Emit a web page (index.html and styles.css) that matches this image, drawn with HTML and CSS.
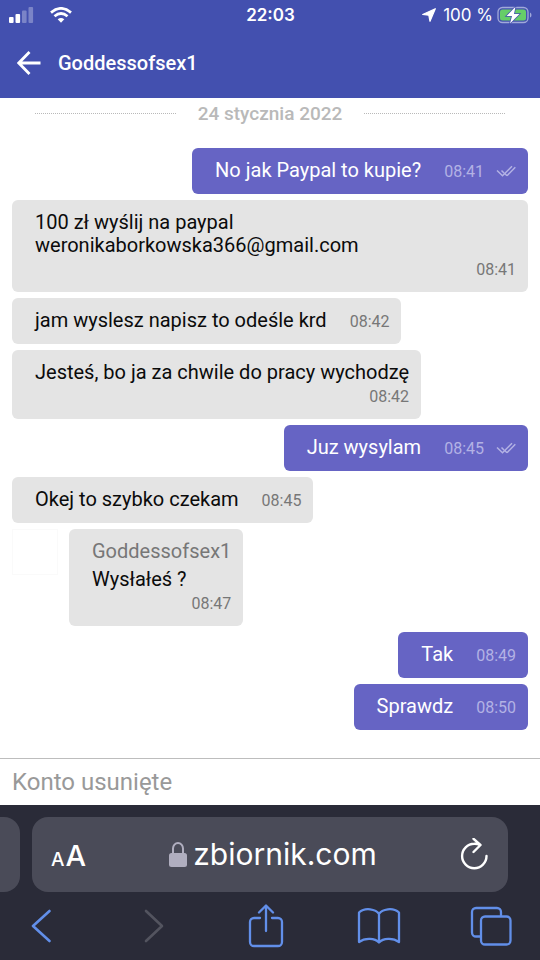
FILE: index.html
```html
<!DOCTYPE html>
<html lang="pl">
<head>
<meta charset="utf-8">
<meta name="viewport" content="width=device-width, initial-scale=1">
<title>Goddessofsex1</title>
<link rel="stylesheet" href="styles.css">
</head>
<body>
<div class="screen">
  <header class="top">
    <div class="status">
      <div class="status-side">
        <svg width="25" height="16" viewBox="0 0 25 16" fill="#fff" aria-hidden="true"><rect x="0" y="10" width="4.600" height="6" rx="1"/><rect x="6.500" y="7" width="4.600" height="9" rx="1"/><rect x="13" y="3.500" width="4.600" height="12.500" rx="1" opacity=".3"/><rect x="19.500" y="0" width="4.600" height="16" rx="1" opacity=".3"/></svg>
        <svg class="wifi" width="22" height="16" viewBox="0 0 22 16" fill="none" stroke="#fff" stroke-width="2.8" aria-hidden="true"><path d="M1 5.6Q11-2.8 21 5.6"/><path d="M4.5 9.3Q11 3.8 17.500 9.300"/><path d="M11 15.700L7.700 12.300Q11 9.700 14.300 12.300Z" fill="#fff" stroke="none"/></svg>
      </div>
      <time class="clock">22:03</time>
      <div class="status-side status-end">
        <svg width="14" height="14" viewBox="0 0 14 14" fill="#fff" aria-hidden="true"><path d="M13.300.7L8 13.300L6.800 7.200L.7 6.500Z" stroke="#fff" stroke-width="1.200" stroke-linejoin="round"/></svg>
        <span class="percent">100 %</span>
        <svg width="35" height="18" viewBox="0 0 35 18" aria-hidden="true"><rect x="1" y="1.500" width="30" height="15" rx="4.500" fill="none" stroke="#a0a8da" stroke-width="1.300"/><rect x="3" y="3.500" width="26" height="11" rx="2.500" fill="#66cd68"/><path d="M33 6.500q1.500.5 1.500 2.500t-1.500 2.500z" fill="#a0a8da"/><path d="M18.500.8L9.500 10H15L13 17.400L22.500 8H17Z" fill="#fff" stroke="#4350af" stroke-width="1.500" paint-order="stroke"/></svg>
      </div>
    </div>
    <div class="titlebar">
      <button class="icon-button" type="button" aria-label="Wstecz">
        <svg width="24" height="24" viewBox="0 0 24 24" fill="none" stroke="#fff" stroke-width="2.800"><path d="M12.500 1L1.800 12L12.500 23M2 12H23.500"/></svg>
      </button>
      <h1 class="title">Goddessofsex1</h1>
    </div>
  </header>

  <main class="chat">
    <div class="date"><span>24 stycznia 2022</span></div>
    <div class="message sent"><p>No jak Paypal to kupie?</p><time>08:41</time>
      <svg class="ticks" width="20" height="12" viewBox="0 0 20 12" fill="none" stroke="#b3b2e4" stroke-width="1.500"><path d="M1 5.500L6.500 10.800L16 1.200M5.500 5.500L8 8M11 10.800L19.300 2.200M8.500 8.300L11 10.800"/></svg></div>
    <div class="message wrapped full"><p>100 zł wyślij na paypal<br>weronikaborkowska366@gmail.com</p><time>08:41</time></div>
    <div class="message"><p>jam wyslesz napisz to odeśle krd</p><time>08:42</time></div>
    <div class="message wrapped"><p>Jesteś, bo ja za chwile do pracy wychodzę</p><time>08:42</time></div>
    <div class="message sent"><p>Juz wysylam</p><time>08:45</time>
      <svg class="ticks" width="20" height="12" viewBox="0 0 20 12" fill="none" stroke="#b3b2e4" stroke-width="1.500"><path d="M1 5.500L6.500 10.800L16 1.200M5.500 5.500L8 8M11 10.800L19.300 2.200M8.500 8.300L11 10.800"/></svg></div>
    <div class="message"><p>Okej to szybko czekam</p><time>08:45</time></div>
    <div class="row">
      <div class="avatar"></div>
      <div class="message wrapped"><span class="author">Goddessofsex1</span><p>Wysłałeś ?</p><time>08:47</time></div>
    </div>
    <div class="message sent"><p>Tak</p><time>08:49</time></div>
    <div class="message sent"><p>Sprawdz</p><time>08:50</time></div>
  </main>

  <input class="composer" type="text" placeholder="Konto usunięte" aria-label="Wiadomość" disabled>

  <footer class="browser">
    <div class="tabs">
      <div class="tab-edge"></div>
      <div class="address">
        <button class="icon-button text-size" type="button" aria-label="Rozmiar tekstu"><span class="small-a">A</span><span>A</span></button>
        <a class="domain" href="#">
          <svg width="18" height="26" viewBox="0 0 18 26"><path d="M4 12V6.500a5 5.500 0 0 1 10 0V12" fill="none" stroke="#b0aebf" stroke-width="2"/><rect x="0" y="11" width="18" height="14" rx="2.500" fill="#b0aebf"/></svg>
          <span>zbiornik.com</span>
        </a>
        <button class="icon-button" type="button" aria-label="Odśwież">
          <svg width="28" height="34" viewBox="0 0 28 34" fill="none" stroke="#fff" stroke-width="2.400" stroke-linecap="round" stroke-linejoin="round"><path d="M26.500 18A12.200 12.200 0 1 1 14.300 5.800Q17 5.700 20 6.800M13.500.8L20.500 7L13.500 14"/></svg>
        </button>
      </div>
    </div>
    <nav class="toolbar">
      <button class="icon-button" type="button" aria-label="Poprzednia strona"><svg width="20" height="34" viewBox="0 0 20 34" fill="none" stroke="#628fe9" stroke-width="2.600" stroke-linecap="round" stroke-linejoin="round"><path d="M18.500 2L2 17L18.500 32"/></svg></button>
      <button class="icon-button" type="button" aria-label="Następna strona" disabled><svg width="20" height="34" viewBox="0 0 20 34" fill="none" stroke="#53545f" stroke-width="2.600" stroke-linecap="round" stroke-linejoin="round"><path d="M2 2L18 17L2 32"/></svg></button>
      <button class="icon-button" type="button" aria-label="Udostępnij"><svg width="36" height="44" viewBox="0 0 36 44" fill="none" stroke="#628fe9" stroke-width="2.300" stroke-linecap="round" stroke-linejoin="round"><path d="M12 14H6a4 4 0 0 0-4 4V38a4 4 0 0 0 4 4H30a4 4 0 0 0 4-4V18a4 4 0 0 0-4-4H24M18 27V2M11 8.500L18 1.500L25 8.500"/></svg></button>
      <button class="icon-button" type="button" aria-label="Zakładki"><svg width="44" height="36" viewBox="0 0 44 36" fill="none" stroke="#628fe9" stroke-width="2.300" stroke-linejoin="round"><path d="M22 6C19 1 8-1 2 4.500V34C8 29.500 18 30 22 34.500C26 30 36 29.500 42 34V4.500C36-1 25 1 22 6V34.500"/></svg></button>
      <button class="icon-button" type="button" aria-label="Karty"><svg width="42" height="40" viewBox="0 0 42 40" fill="none" stroke="#628fe9" stroke-width="2.300"><path d="M11 30.500H6a4 4 0 0 1-4-4V6a4 4 0 0 1 4-4H27a4 4 0 0 1 4 4V10.500"/><rect x="11" y="10.500" width="29.500" height="28" rx="4"/></svg></button>
    </nav>
  </footer>
</div>
</body>
</html>
```
FILE: styles.css
```css
* { box-sizing: border-box; }
body { margin: 0; background: #fff; font-family: Roboto, "Liberation Sans", sans-serif; font-size: 20px; line-height: 23px; color: #0b0b0b; }
p, h1 { margin: 0; }
svg { display: block; flex: none; }
.screen { display: flex; flex-direction: column; min-height: 100vh; }
.icon-button { display: flex; align-items: center; padding: 0; border: 0; background: none; color: inherit; font: inherit; }

.top { background: #4350af; color: #fff; }
.status { display: flex; align-items: center; height: 28px; padding: 2px 8px 0 9px; font-family: Inter, sans-serif; }
.status-side { display: flex; flex: 1; align-items: center; }
.status-end { justify-content: flex-end; gap: 4px; }
.wifi { margin-left: 16px; }
.clock { font-size: 17px; font-weight: 600; }
.percent { margin-left: 3px; font-size: 17px; }
.titlebar { display: flex; align-items: center; gap: 17px; height: 70px; padding: 0 17px; }
.title { font-size: 20px; font-weight: 500; }

.chat { display: flex; flex: 1; flex-direction: column; align-items: flex-start; gap: 6px; padding: 4px 12px 28px; }
.date { display: flex; align-self: stretch; align-items: center; gap: 22px; margin-bottom: 17px; padding: 0 23px; color: #b9b9b9; font-size: 19px; font-weight: 500; }
.date::before, .date::after { content: ""; flex: 1; border-top: 1px dotted #b9b9b9; }
.message { display: flex; align-items: center; padding: 11px 12px 12px 23px; border-radius: 6px; background: #e4e4e4; }
.message time { margin-left: 23px; padding-top: 2px; font-size: 16px; line-height: 21px; color: #777; }
.sent { align-self: flex-end; background: #6664c4; color: #fff; }
.message.sent time { color: #b3b2e4; }
.ticks { margin-left: 12px; }
.wrapped { flex-direction: column; align-items: flex-start; }
.wrapped time { align-self: flex-end; }
.full { align-self: stretch; }
.row { display: flex; gap: 11px; }
.avatar { width: 46px; height: 46px; border: 1px solid #fafafa; }
.author { margin-bottom: 5px; color: #777; }

.composer { width: 100%; height: 47px; padding: 0 12px; border: 0; border-top: 1px solid #bdbdbd; background: #fff; font: 24px Roboto, sans-serif; }
.composer::placeholder { color: #999; opacity: 1; }

.browser { padding-top: 12px; background: #2a2b38; color: #fff; }
.tabs { display: flex; gap: 12px; padding-right: 32px; }
.tab-edge { width: 20px; border-radius: 0 16px 16px 0; background: #4a4b58; }
.address { display: flex; flex: 1; align-items: center; justify-content: space-between; height: 75px; padding: 0 20px 0 19px; border-radius: 16px; background: #4a4b58; }
.text-size { align-items: baseline; gap: 1px; padding-top: 6px; font-family: Inter, sans-serif; font-size: 29px; font-weight: 500; }
.small-a { font-size: 19px; }
.domain { display: flex; align-items: center; gap: 6px; color: #fff; font-family: Inter, sans-serif; font-size: 30px; text-decoration: none; }
.toolbar { display: flex; align-items: center; justify-content: space-between; height: 68px; padding: 0 27px 0 19px; }
.toolbar .icon-button { justify-content: center; width: 44px; }
```
